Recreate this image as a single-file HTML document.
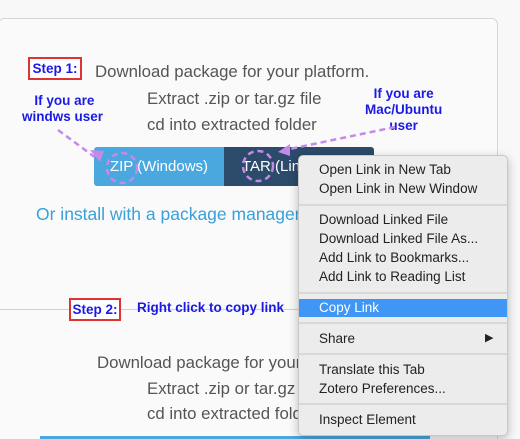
<!DOCTYPE html><html><head><style>
html,body{margin:0;width:520px;height:439px;overflow:hidden}
body{background:#f8f8f8;position:relative;font-family:"Liberation Sans",sans-serif}
.a{position:absolute}
.g{color:#555;font-size:16.8px;white-space:nowrap}
.b{color:#1a1ae6;font-weight:bold;font-size:13.5px;white-space:nowrap}
.m{position:absolute;left:298px;top:155px;width:208px;height:279px;background:#ececec;border:1px solid #c8c8c8;border-radius:5px;box-shadow:0 3px 10px rgba(0,0,0,.25);font-size:13.5px;color:#222}
.m div{position:absolute;left:20px;white-space:nowrap}
.s{position:absolute;left:0;right:0;height:2px;background:#d8d8d8}
</style></head><body>
<div class="a" style="left:-2px;top:18px;width:498px;height:430px;border:1px solid #d6d6d6;border-radius:6px;background:#fafafa"></div>
<div class="a" style="left:0;top:309px;width:498px;height:1px;background:#d0d0d0"></div>
<div class="a b" style="left:28px;top:57px;width:50px;height:19px;border:2px solid #d33;line-height:19px;text-align:center;background:#fff">Step 1:</div>
<div class="a g" style="left:95px;top:62px">Download package for your platform.</div>
<div class="a g" style="left:147px;top:89px">Extract .zip or tar.gz file</div>
<div class="a g" style="left:147px;top:115px">cd into extracted folder</div>
<div class="a b" style="left:22px;top:93px;text-align:center;line-height:16px">&nbsp;If you are<br>windws user</div>
<div class="a b" style="left:365px;top:86px;text-align:center;line-height:16px">If you are<br>Mac/Ubuntu<br>user</div>
<div class="a" style="left:94px;top:147px;width:130px;height:39px;background:#4aa8de;border-radius:3px 0 0 3px;color:#fff;font-size:15px;line-height:40px;text-align:center">ZIP (Windows)</div>
<div class="a" style="left:224px;top:147px;width:150px;height:39px;background:#2c4a6a;border-radius:0 3px 3px 0;color:#fff;font-size:15px;line-height:40px;padding-left:18px;box-sizing:border-box">TAR (Linux)</div>
<div class="a" style="left:36px;top:204px;color:#38a0da;font-size:17.5px;white-space:nowrap">Or install with a package manager</div>
<svg class="a" style="left:0;top:0" width="520" height="439">
<g stroke="#c58ae8" stroke-width="2.5" fill="none" stroke-dasharray="6 4">
<circle cx="122" cy="168" r="15"/><circle cx="258" cy="166" r="15"/>
<path d="M58 130 L96 158"/><path d="M395 127 L285 150"/></g>
<path d="M100 162 L90 150 L104 151Z" fill="#c58ae8"/>
<path d="M278 152 L290 144 L290 156Z" fill="#c58ae8"/>
</svg>
<div class="a b" style="left:69px;top:298px;width:48px;height:19px;border:2px solid #d33;line-height:19px;text-align:center;background:#fff">Step 2:</div>
<div class="a b" style="left:137px;top:300px">Right click to copy link</div>
<div class="a g" style="left:97px;top:353px">Download package for your platform.</div>
<div class="a g" style="left:147px;top:379px">Extract .zip or tar.gz file</div>
<div class="a g" style="left:147px;top:404px">cd into extracted folder</div>
<div class="a" style="left:40px;top:436px;width:390px;height:5px;background:#4aa8de"></div>
<div class="m">
<div style="top:6px">Open Link in New Tab</div>
<div style="top:25px">Open Link in New Window</div>
<span class="s" style="top:48px"></span>
<div style="top:56px">Download Linked File</div>
<div style="top:75px">Download Linked File As...</div>
<div style="top:94px">Add Link to Bookmarks...</div>
<div style="top:113px">Add Link to Reading List</div>
<span class="s" style="top:136px"></span>
<span style="position:absolute;left:0;right:0;top:143px;height:18px;background:#3f96f5"></span>
<div style="top:144px;color:#fff">Copy Link</div>
<span class="s" style="top:166px"></span>
<div style="top:175px">Share</div><div style="left:186px;top:175px;font-size:11px">▶</div>
<span class="s" style="top:197px"></span>
<div style="top:206px">Translate this Tab</div>
<div style="top:225px">Zotero Preferences...</div>
<span class="s" style="top:247px"></span>
<div style="top:256px">Inspect Element</div>
</div>
</body></html>
